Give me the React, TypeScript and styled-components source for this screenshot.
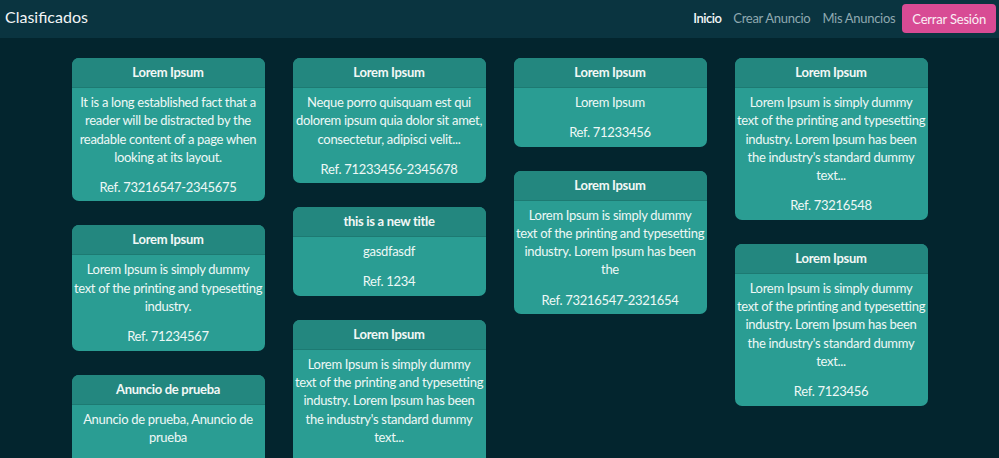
import React from "react";
import styled, { createGlobalStyle } from "styled-components";

const Global = createGlobalStyle`
  html, body { margin: 0; padding: 0; background: #03252e; }
  body { font-family: Lato, "Noto Sans", sans-serif; overflow: hidden; letter-spacing: -0.3px; }
  * { box-sizing: border-box; }
`;

const Nav = styled.nav`
  height: 38px;
  background: #0a3440;
  display: flex;
  align-items: center;
  justify-content: space-between;
  padding: 0 3px 1px 5px;
`;

const Brand = styled.div`
  color: #f2f5f6;
  font-size: 16px;
  letter-spacing: 0;
  padding-bottom: 4px;
`;

const Links = styled.div`
  display: flex;
  align-items: center;
`;

const NavLink = styled.a<{ $active?: boolean }>`
  color: ${(p) => (p.$active ? "#f4f7f8" : "#8fa9b0")};
  font-size: 13px;
  padding: 0 6px 2px;
  text-decoration: none;
  ${(p) => (p.$active ? "font-weight: 600; letter-spacing: -0.5px; padding-left: 8px;" : "")}
`;

const LogoutButton = styled.button`
  margin-left: 1px;
  height: 29px;
  padding: 0 10px;
  border: none;
  border-radius: 4px;
  background: #d84b94;
  color: #fbeff5;
  font-family: inherit;
  font-size: 13px;
  letter-spacing: -0.2px;
`;

const Board = styled.main`
  display: flex;
  justify-content: center;
  gap: 28px;
  padding-top: 20px;
`;

const Column = styled.div`
  width: 193px;
  display: flex;
  flex-direction: column;
  gap: 24px;
`;

const Card = styled.article`
  background: #2a9d93;
  border-radius: 7px;
  overflow: hidden;
  color: #eef8f6;
  text-align: center;
  font-size: 13px;
`;

const CardHeader = styled.header`
  height: 30px;
  padding-bottom: 1px;
  background: #23877f;
  border-bottom: 1px solid #1d7a72;
  display: flex;
  align-items: center;
  justify-content: center;
  font-weight: 700;
  color: #f2f7f6;
`;

const CardBody = styled.div`
  padding: 5px 0 5px;
  line-height: 18.3px;
`;

const Text = styled.p`
  margin: 0 0 12px;
`;

const Line = styled.span`
  display: block;
  white-space: nowrap;
`;

const Ref = styled.p`
  margin: 0;
`;

type Ad = { title: string; lines: string[]; ref: string };

const lorem = [
  "Lorem Ipsum is simply dummy",
  "text of the printing and typesetting",
  "industry. Lorem Ipsum has been",
  "the industry's standard dummy",
  "text...",
];

const columns: Ad[][] = [
  [
    {
      title: "Lorem Ipsum",
      lines: [
        "It is a long established fact that a",
        "reader will be distracted by the",
        "readable content of a page when",
        "looking at its layout.",
      ],
      ref: "Ref. 73216547-2345675",
    },
    {
      title: "Lorem Ipsum",
      lines: ["Lorem Ipsum is simply dummy", "text of the printing and typesetting", "industry."],
      ref: "Ref. 71234567",
    },
    {
      title: "Anuncio de prueba",
      lines: ["Anuncio de prueba, Anuncio de", "prueba"],
      ref: "Ref. 1",
    },
  ],
  [
    {
      title: "Lorem Ipsum",
      lines: [
        "Neque porro quisquam est qui",
        "dolorem ipsum quia dolor sit amet,",
        "consectetur, adipisci velit...",
      ],
      ref: "Ref. 71233456-2345678",
    },
    { title: "this is a new title", lines: ["gasdfasdf"], ref: "Ref. 1234" },
    { title: "Lorem Ipsum", lines: lorem, ref: "Ref. 7123456" },
  ],
  [
    { title: "Lorem Ipsum", lines: ["Lorem Ipsum"], ref: "Ref. 71233456" },
    {
      title: "Lorem Ipsum",
      lines: [
        "Lorem Ipsum is simply dummy",
        "text of the printing and typesetting",
        "industry. Lorem Ipsum has been",
        "the",
      ],
      ref: "Ref. 73216547-2321654",
    },
  ],
  [
    { title: "Lorem Ipsum", lines: lorem, ref: "Ref. 73216548" },
    { title: "Lorem Ipsum", lines: lorem, ref: "Ref. 7123456" },
  ],
];

export default function App() {
  return (
    <>
      <Global />
      <Nav>
        <Brand>Clasificados</Brand>
        <Links>
          <NavLink $active>Inicio</NavLink>
          <NavLink>Crear Anuncio</NavLink>
          <NavLink>Mis Anuncios</NavLink>
          <LogoutButton>Cerrar Sesión</LogoutButton>
        </Links>
      </Nav>
      <Board>
        {columns.map((col, i) => (
          <Column key={i}>
            {col.map((ad, j) => (
              <Card key={j}>
                <CardHeader>{ad.title}</CardHeader>
                <CardBody>
                  <Text>
                    {ad.lines.map((l, k) => (
                      <Line key={k}>{l}</Line>
                    ))}
                  </Text>
                  <Ref>{ad.ref}</Ref>
                </CardBody>
              </Card>
            ))}
          </Column>
        ))}
      </Board>
    </>
  );
}
